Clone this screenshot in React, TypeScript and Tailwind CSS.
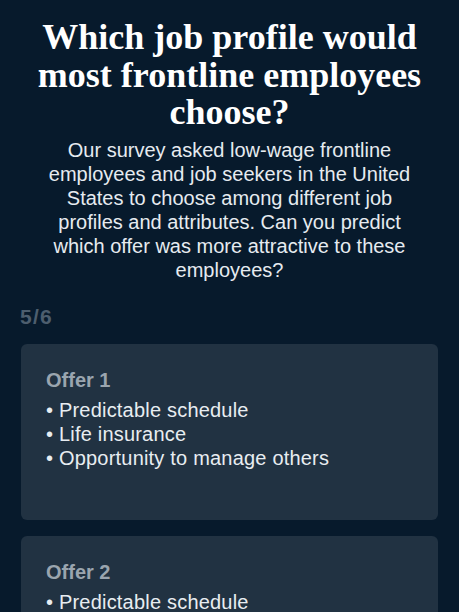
import React from 'react';

const offers = [
  { title: 'Offer 1', items: ['Predictable schedule', 'Life insurance', 'Opportunity to manage others'] },
  { title: 'Offer 2', items: ['Predictable schedule', 'Health insurance', 'Opportunity to manage others'] },
];

export default function App() {
  return (
    <div className="w-full h-[612px] bg-[#071a2c] overflow-hidden">
      {/* Heading */}
      <div className="px-4 pt-[19px] flex flex-col items-center text-center">
        <h1 className="font-['Liberation_Serif',serif] font-bold text-[36px] leading-[37.5px] text-white">
          Which job profile would most frontline employees choose?
        </h1>
        <p className="mt-[6px] max-w-[387px] font-['Liberation_Sans',sans-serif] text-[20px] leading-[24px] text-[#e6ebf0]">
          Our survey asked low-wage frontline employees and job seekers in the United States to choose among different job profiles and attributes. Can you predict which offer was more attractive to these employees?
        </p>
      </div>

      {/* Progress */}
      <div className="px-5 mt-[19px] font-['Liberation_Sans',sans-serif] font-bold text-[21px] tracking-[0.06em] text-[#4d5e6e]">5/6</div>

      {/* Offers */}
      <div className="mt-[12px] px-[21px] flex flex-col gap-4">
        {offers.map((o) => (
          <div key={o.title} className="rounded-md bg-[#213242] px-[25px] pt-[21px] h-[176px]">
            <div className="font-['Liberation_Sans',sans-serif] font-bold text-[20px] text-[#9aa5af]">{o.title}</div>
            <ul className="mt-[3px] font-['Liberation_Sans',sans-serif] text-[20px] leading-[24px] tracking-[0.01em] text-[#e8edf1]">
              {o.items.map((it) => (
                <li key={it}>• {it}</li>
              ))}
            </ul>
          </div>
        ))}
      </div>
    </div>
  );
}
